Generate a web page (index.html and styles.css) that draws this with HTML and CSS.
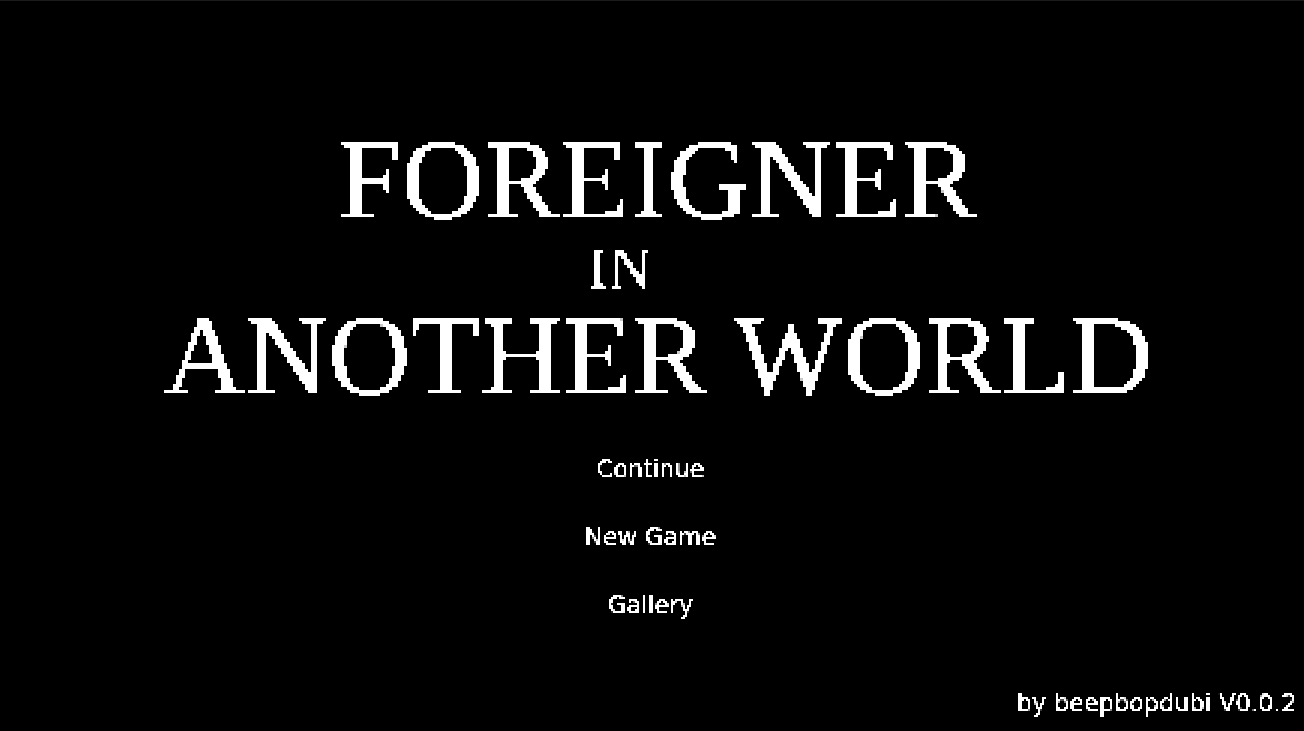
FILE: index.html
```
<!DOCTYPE html>
<html lang="en">
<head>
    <meta charset="UTF-8">
    <meta name="viewport" content="width=device-width, initial-scale=1.0">
    <title>Foreigner in Another World</title>
    <link rel="stylesheet" href="styles.css">
</head>
<body>

<main class="screen">
    <h1 class="title">
        <span class="titleLine">FOREIGNER</span>
        <span class="titleSmall">IN</span>
        <span class="titleLine">ANOTHER WORLD</span>
    </h1>

    <nav class="menu">
        <button class="menuBtn" type="button">Continue</button>
        <button class="menuBtn" type="button">New Game</button>
        <button class="menuBtn" type="button">Gallery</button>
    </nav>

    <footer class="credit">by beepbopdubi V0.0.2</footer>
</main>

<!-- blocky pixels for the title and menu lettering -->
<svg class="filters" width="0" height="0" aria-hidden="true">
    <filter id="pixelBig" x="0" y="0" width="1" height="1" color-interpolation-filters="sRGB">
        <feFlood x="1" y="1" width="1" height="1" flood-color="#fff"/>
        <feComposite width="3" height="3"/>
        <feTile result="grid"/>
        <feGaussianBlur in="SourceGraphic" stdDeviation="1"/>
        <feComponentTransfer result="solid">
            <feFuncR type="linear" slope="0" intercept="1"/>
            <feFuncG type="linear" slope="0" intercept="1"/>
            <feFuncB type="linear" slope="0" intercept="1"/>
            <feFuncA type="linear" slope="200" intercept="-80"/>
        </feComponentTransfer>
        <feComposite in="solid" in2="grid" operator="in"/>
        <feMorphology operator="dilate" radius="1"/>
    </filter>
    <filter id="pixelSmall" x="0" y="0" width="1" height="1" color-interpolation-filters="sRGB">
        <feFlood x="0" y="0" width="1" height="1" flood-color="#fff"/>
        <feComposite width="2" height="2"/>
        <feTile result="grid"/>
        <feGaussianBlur in="SourceGraphic" stdDeviation="0.6"/>
        <feComponentTransfer result="solid">
            <feFuncA type="linear" slope="6" intercept="-1"/>
        </feComponentTransfer>
        <feComposite in="solid" in2="grid" operator="in" result="dots"/>
        <feOffset in="dots" dx="1" dy="0" result="right"/>
        <feOffset in="dots" dx="0" dy="1" result="down"/>
        <feOffset in="dots" dx="1" dy="1" result="corner"/>
        <feMerge>
            <feMergeNode in="dots"/>
            <feMergeNode in="right"/>
            <feMergeNode in="down"/>
            <feMergeNode in="corner"/>
        </feMerge>
    </filter>
</svg>

</body>
</html>
```
FILE: styles.css
```
* {
    box-sizing: border-box;
}
body {
    margin: 0;
    background-color: #000;
    color: #fff;
    font-family: "DejaVu Sans", sans-serif;
}
.screen {
    display: flex;
    flex-direction: column;
    align-items: center;
    min-height: 100vh;
    padding: 129px 8px 12px;
    border-top: 1px solid #1c1c1c;
}
.title {
    display: flex;
    flex-direction: column;
    align-items: center;
    gap: 8px;
    margin: 0 0 49px;
    padding-left: 12px;
    font-family: "Liberation Serif", serif;
    font-weight: normal;
}
.titleLine {
    font-size: 114px;
    line-height: 100px;
    white-space: nowrap;
    filter: url(#pixelBig);
}
.titleSmall {
    padding-right: 76px;
    font-size: 60px;
    line-height: 60px;
    filter: url(#pixelBig);
}
.menu {
    display: flex;
    flex-direction: column;
    align-items: center;
    gap: 40px;
    padding-right: 4px;
}
.menuBtn {
    padding: 0;
    border: none;
    background: none;
    color: #fff;
    font-family: inherit;
    font-size: 24px;
    line-height: 28px;
    cursor: pointer;
    filter: url(#pixelSmall);
}
.menuBtn:hover {
    color: #aaa;
}
.credit {
    align-self: flex-end;
    margin-top: auto;
    font-size: 24px;
    line-height: 32px;
    filter: url(#pixelSmall);
}
.filters {
    position: absolute;
}
```
